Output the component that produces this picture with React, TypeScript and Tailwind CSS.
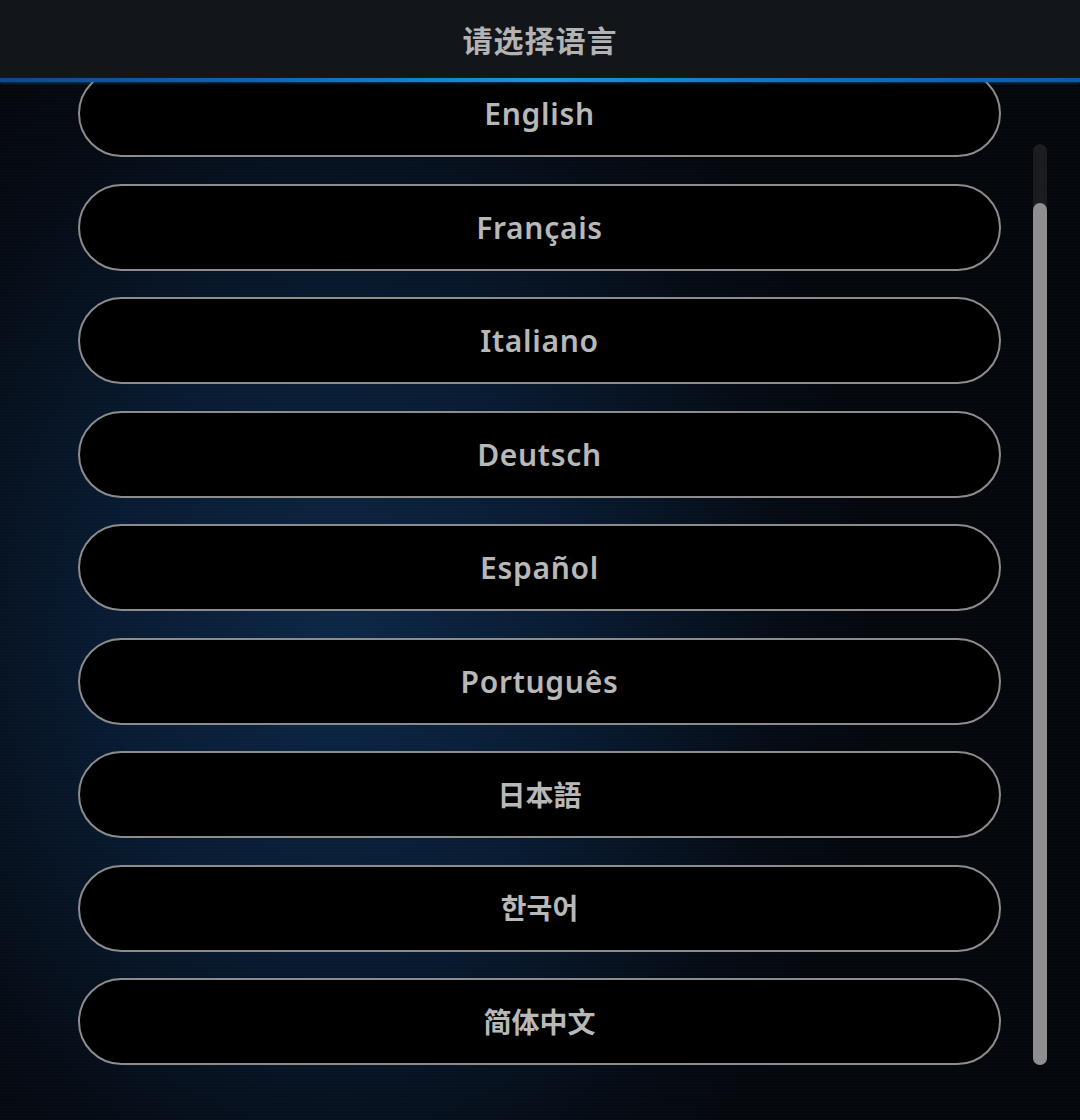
const LANGUAGES = [
  { label: 'English', latin: true },
  { label: 'Français', latin: true },
  { label: 'Italiano', latin: true },
  { label: 'Deutsch', latin: true },
  { label: 'Español', latin: true },
  { label: 'Português', latin: true },
  { label: '日本語', latin: false },
  { label: '한국어', latin: false },
  { label: '简体中文', latin: false }
]

const FONT = "font-['Noto_Sans','Noto_Sans_CJK_SC','Noto_Sans_CJK_KR',sans-serif]"

function LanguageButton({ label, latin }: { label: string; latin: boolean }): React.JSX.Element {
  return (
    <button
      type="button"
      className={`flex h-[87px] w-[923px] shrink-0 items-center justify-center rounded-full border-2 border-[#8c8c8c] bg-black font-semibold text-[#b8b8b8] ${FONT} ${
        latin ? 'text-[30px] tracking-[0.7px]' : 'text-[28px]'
      }`}
    >
      {label}
    </button>
  )
}

export default function App(): React.JSX.Element {
  return (
    <div
      className={`relative flex h-[1120px] w-[1080px] flex-col overflow-hidden bg-[#04070c] ${FONT}`}
    >
      {/* blue glow behind the list */}
      <div className="pointer-events-none absolute inset-0 bg-[radial-gradient(ellipse_560px_720px_at_340px_640px,#0c2746_0%,#081a30_45%,#050b14_80%,#04070c_100%)]" />
      <div className="pointer-events-none absolute inset-0 bg-[repeating-linear-gradient(0deg,rgba(255,255,255,0.012)_0px,rgba(255,255,255,0.012)_1px,transparent_1px,transparent_3px)]" />

      <header className="relative z-10 flex h-[78px] shrink-0 items-center justify-center bg-[#121519]">
        <h1 className="mt-[2px] text-[30px] font-semibold tracking-[1px] text-[#b3b3b3]">请选择语言</h1>
      </header>
      <div className="relative z-10 h-[4px] shrink-0 bg-[linear-gradient(90deg,#0c4a8a_0%,#1466ae_25%,#1b98d0_50%,#1670b8_75%,#0f5aa4_100%)] shadow-[0_1px_3px_rgba(20,120,200,0.5)]" />

      <div className="relative flex min-h-0 flex-1">
        <div className="flex min-w-0 flex-1 flex-col overflow-hidden pl-[78px]">
          <div className="-mt-[12px] flex flex-col gap-[26.5px]">
            {LANGUAGES.map((item) => (
              <LanguageButton key={item.label} label={item.label} latin={item.latin} />
            ))}
          </div>
        </div>

        <div className="absolute left-[1033px] top-[62px] flex h-[921px] w-[14px] flex-col rounded-full bg-[#1b1c1f]">
          <div className="mt-[59px] flex-1 rounded-full bg-[#8f8f8f]" />
        </div>
      </div>
    </div>
  )
}
